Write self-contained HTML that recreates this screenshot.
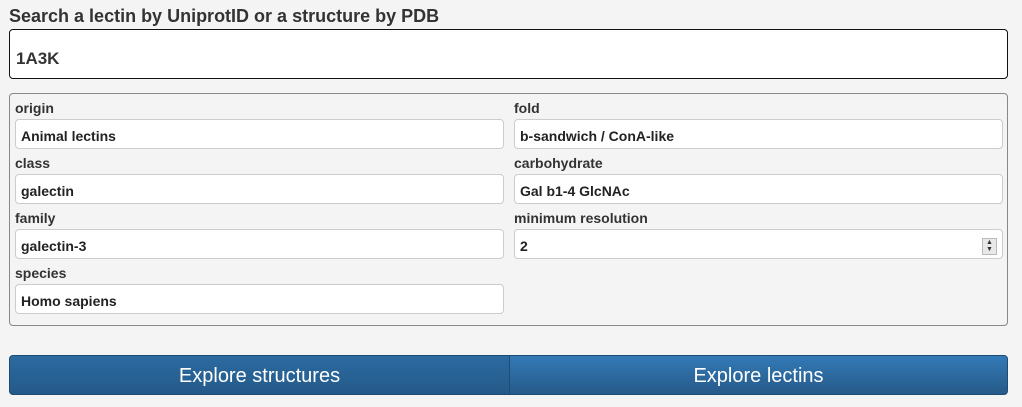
<!DOCTYPE html>
<html><head><style>
body{margin:0;background:#f4f4f4;font-family:"Liberation Sans",Arial,sans-serif;color:#333;width:1022px;height:407px;position:relative;overflow:hidden}
.a{position:absolute}
.t{left:9px;top:6px;font-size:18px;font-weight:bold;color:#333}
.s{left:9px;top:29px;border:1px solid #111;border-radius:4px;background:#fff;box-sizing:border-box;width:999px;height:50px;font-size:17px;font-weight:bold;padding:19px 0 0 6px}
.p{left:9px;top:93px;width:999px;height:233px;border:1px solid #888;border-radius:4px;box-sizing:border-box}
.l{font-size:14px;font-weight:bold;color:#333}
.i{height:30px;border:1px solid #ccc;border-radius:4px;background:#fff;box-sizing:border-box;font-size:14px;font-weight:bold;padding:8px 0 0 5px;color:#222}
.b{top:355px;height:40px;box-sizing:border-box;color:#fff;font-size:20px;text-align:center;line-height:40px;border:1px solid #1f4b75}
</style></head><body>
<div class="a t">Search a lectin by UniprotID or a structure by PDB</div>
<div class="a s">1A3K</div>
<div class="a p"></div>
<div class="a l" style="left:15px;top:100px">origin</div>
<div class="a i" style="left:15px;top:119px;width:489px">Animal lectins</div>
<div class="a l" style="left:15px;top:155px">class</div>
<div class="a i" style="left:15px;top:174px;width:489px">galectin</div>
<div class="a l" style="left:15px;top:210px">family</div>
<div class="a i" style="left:15px;top:229px;width:489px">galectin-3</div>
<div class="a l" style="left:15px;top:265px">species</div>
<div class="a i" style="left:15px;top:284px;width:489px">Homo sapiens</div>
<div class="a l" style="left:514px;top:100px">fold</div>
<div class="a i" style="left:514px;top:119px;width:489px">b-sandwich / ConA-like</div>
<div class="a l" style="left:514px;top:155px">carbohydrate</div>
<div class="a i" style="left:514px;top:174px;width:489px">Gal b1-4 GlcNAc</div>
<div class="a l" style="left:514px;top:210px">minimum resolution</div>
<div class="a i" style="left:514px;top:229px;width:489px">2</div>
<div class="a" style="left:982px;top:238px;width:15px;height:17px;background:#e8e8e8;border:1px solid #bbb;box-sizing:border-box;font-size:7px;line-height:7px;text-align:center">▲<br>▼</div>
<div class="a b" style="left:9px;width:501px;background:linear-gradient(#2c6aa0,#245a8a);border-radius:4px 0 0 4px">Explore structures</div>
<div class="a b" style="left:509px;width:499px;background:linear-gradient(#337ab7,#265a88);border-radius:0 4px 4px 0">Explore lectins</div>
</body></html>
